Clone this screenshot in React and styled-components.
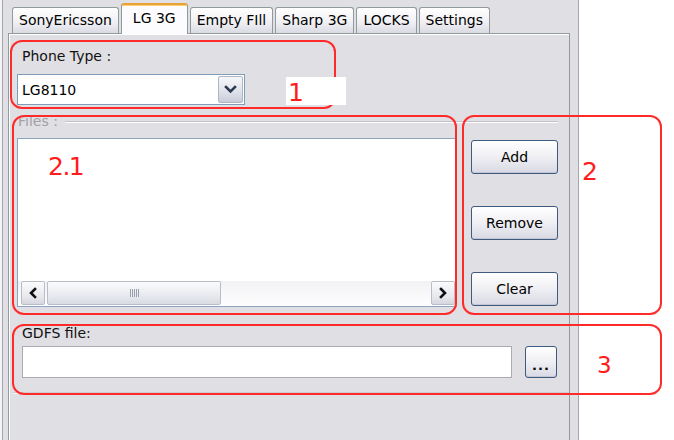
import React from "react";
import styled, { createGlobalStyle, css } from "styled-components";

const GlobalStyle = createGlobalStyle`
  html, body { margin: 0; padding: 0; background: #fff; }
  body { font-family: "DejaVu Sans", Verdana, sans-serif; }
  #root { width: 674px; height: 440px; overflow: hidden; }
`;

const Page = styled.div`
  position: relative;
  display: flex;
  width: 674px;
  height: 440px;
  background: #fff;
  overflow: hidden;
`;

const Window = styled.div`
  width: 579px;
  height: 440px;
  box-sizing: border-box;
  background: #e0dfe3;
  border-right: 1px solid #a4a6ae;
  box-shadow: inset 2px 0 0 #f3f3f5, inset 3px 0 0 #a4a6ae;
  display: flex;
  flex-direction: column;
`;

const TabStrip = styled.div`
  position: relative;
  z-index: 1;
  display: flex;
  align-items: flex-end;
  height: 33px;
  padding-left: 12px;
  gap: 2px;
`;

const Tab = styled.div`
  box-sizing: border-box;
  font-size: 14px;
  line-height: 17px;
  color: #000;
  white-space: nowrap;
  border: 1px solid #919b9c;
  border-bottom: none;
  border-radius: 3px 3px 0 0;
  ${(p) =>
    p.$active
      ? css`
          height: 31px;
          margin-bottom: -1px;
          padding: 5px 11px 0;
          background: #fcfcfe;
          border-top: 2px solid #e8a23c;
          box-shadow: inset 0 1px 0 #ffcf6a;
        `
      : css`
          height: 26px;
          padding: 4px 6px 0;
          background: linear-gradient(#ffffff, #f1f1f5 55%, #dadbe3);
        `}
`;

const Panel = styled.div`
  margin-left: 8px;
  width: 562px;
  flex: 1;
  box-sizing: border-box;
  border: 1px solid #919b9c;
  border-bottom: none;
  background: #e0dfe3;
  box-shadow: inset 1px 1px 0 #fff;
  display: flex;
  flex-direction: column;
`;

const PhoneSection = styled.div`
  margin-top: 14px;
  padding-left: 8px;
  display: flex;
  flex-direction: column;
  align-items: flex-start;
`;

const FieldLabel = styled.div`
  font-size: 14px;
  line-height: 17px;
  height: 17px;
  color: ${(p) => (p.$disabled ? "#a2a2a6" : "#111")};
  margin-left: ${(p) => p.$indent || 0}px;
  white-space: nowrap;
`;

const Combo = styled.div`
  margin-top: 9px;
  width: 228px;
  height: 31px;
  box-sizing: border-box;
  border: 1px solid #7f9db9;
  background: #fff;
  display: flex;
  align-items: center;
  font-size: 14px;
  color: #000;
`;

const ComboText = styled.span`
  padding-left: 4px;
  flex: 1;
`;

const ComboButton = styled.div`
  width: 25px;
  height: 27px;
  margin-right: 1px;
  box-sizing: border-box;
  border: 1px solid #aeb6c6;
  border-radius: 2px;
  background: linear-gradient(#f6f7fa, #dfe1ea 60%, #c9ccd8);
  display: flex;
  align-items: center;
  justify-content: center;
`;

const FilesGroup = styled.div`
  margin-top: 8px;
  margin-left: 9px;
  width: 540px;
  display: flex;
  flex-direction: column;
`;

const LegendRow = styled.div`
  display: flex;
  align-items: center;
  height: 17px;
`;

const GroupLine = styled.div`
  flex: 1;
  height: 0;
  margin-left: ${(p) => p.$gap || 0}px;
  border-top: 1px solid #c2c2c8;
  border-bottom: 1px solid #fff;
`;

const FilesRow = styled.div`
  display: flex;
  margin-top: 8px;
  margin-left: -1px;
`;

const ListBox = styled.div`
  width: 440px;
  height: 169px;
  box-sizing: border-box;
  border: 1px solid #8ea5c0;
  background: #fff;
  display: flex;
  flex-direction: column;
  justify-content: flex-end;
`;

const HScroll = styled.div`
  height: 24px;
  margin-bottom: 1px;
  padding: 0 1px 0 3px;
  display: flex;
  align-items: stretch;
  background: linear-gradient(#f2f2f5, #fdfdfe);
`;

const ScrollArrow = styled.div`
  width: 24px;
  box-sizing: border-box;
  border: 1px solid #b9bdc8;
  border-radius: 2px;
  background: linear-gradient(#fbfbfc, #e6e7ed 70%, #d5d7df);
  display: flex;
  align-items: center;
  justify-content: center;
`;

const ScrollThumb = styled.div`
  width: 174px;
  margin-left: 2px;
  box-sizing: border-box;
  border: 1px solid #b9bdc8;
  border-radius: 2px;
  background: linear-gradient(#fbfbfc, #e9eaef 60%, #d9dbe2);
  display: flex;
  align-items: center;
  justify-content: center;
`;

const ScrollTrack = styled.div`
  flex: 1;
`;

const ButtonColumn = styled.div`
  margin-left: 14px;
  padding-top: 2px;
  display: flex;
  flex-direction: column;
  gap: 32px;
`;

const XPButton = styled.div`
  width: ${(p) => p.$w || 87}px;
  height: ${(p) => p.$h || 34}px;
  box-sizing: border-box;
  border: 1px solid #3d5a7f;
  border-radius: 3px;
  background: linear-gradient(#ffffff, #f1f1f5 45%, #d8d9e4);
  box-shadow: inset 0 -1px 0 #c4c6d4;
  display: flex;
  align-items: center;
  justify-content: center;
  font-size: 14px;
  color: #000;
`;

const Dots = styled.span`
  font-weight: bold;
  font-size: 13px;
  line-height: 1;
  margin-top: 6px;
  letter-spacing: 1px;
`;

const GdfsSection = styled.div`
  margin-top: 18px;
  padding-left: 13px;
  display: flex;
  flex-direction: column;
`;

const InputRow = styled.div`
  display: flex;
  margin-top: 4px;
`;

const TextBox = styled.div`
  width: 490px;
  height: 32px;
  box-sizing: border-box;
  border: 1px solid #a9adb3;
  background: #fff;
`;

const Separator = styled.div`
  margin: 14px 0 0 -9px;
  height: 0;
  border-top: 1px solid #cbcbd0;
  border-bottom: 1px solid #fafafc;
`;

/* annotation overlay drawn on top of the screenshot */
const AnnoBox = styled.div`
  position: absolute;
  box-sizing: border-box;
  border: 2px solid #ff2b2b;
  border-radius: 12px;
  pointer-events: none;
`;

const AnnoNumber = styled.div`
  position: absolute;
  font-family: "DejaVu Sans", Verdana, sans-serif;
  font-size: ${(p) => p.$size || 25}px;
  line-height: 1;
  color: #ff1c1c;
  letter-spacing: ${(p) => p.$ls || 0}px;
  white-space: nowrap;
`;

const AnnoTag = styled.div`
  position: absolute;
  background: #fff;
  box-sizing: border-box;
  padding: 3px 0 0 2px;
  font-size: 25px;
  line-height: 1;
  color: #ff1c1c;
`;

const ChevronDown = () => (
  <svg width="13" height="9" viewBox="0 0 13 9">
    <path d="M2 2 L6.5 6.5 L11 2" fill="none" stroke="#2e3a52" strokeWidth="2.6" strokeLinecap="square" />
  </svg>
);

const Chevron = ({ dir }) => (
  <svg width="10" height="12" viewBox="0 0 10 12">
    <path
      d={dir === "left" ? "M7 2 L3 6 L7 10" : "M3 2 L7 6 L3 10"}
      fill="none"
      stroke="#111"
      strokeWidth="2.6"
      strokeLinecap="square"
    />
  </svg>
);

const Grip = () => (
  <svg width="9" height="8" viewBox="0 0 9 8">
    {[0.5, 2.5, 4.5, 6.5, 8.5].map((x) => (
      <line key={x} x1={x} y1="0" x2={x} y2="8" stroke="#9aa0ae" strokeWidth="1" />
    ))}
  </svg>
);

const tabs = ["SonyEricsson", "LG 3G", "Empty FIll", "Sharp 3G", "LOCKS", "Settings"];

export default function App() {
  return (
    <>
      <GlobalStyle />
      <Page>
        <Window>
          <TabStrip>
            {tabs.map((t) => (
              <Tab key={t} $active={t === "LG 3G"}>
                {t}
              </Tab>
            ))}
          </TabStrip>
          <Panel>
            <PhoneSection>
              <FieldLabel $indent={5}>Phone Type :</FieldLabel>
              <Combo>
                <ComboText>LG8110</ComboText>
                <ComboButton>
                  <ChevronDown />
                </ComboButton>
              </Combo>
            </PhoneSection>

            <FilesGroup>
              <LegendRow>
                <FieldLabel $disabled>Files :</FieldLabel>
                <GroupLine $gap={7} />
              </LegendRow>
              <FilesRow>
                <ListBox>
                  <HScroll>
                    <ScrollArrow>
                      <Chevron dir="left" />
                    </ScrollArrow>
                    <ScrollThumb>
                      <Grip />
                    </ScrollThumb>
                    <ScrollTrack />
                    <ScrollArrow>
                      <Chevron dir="right" />
                    </ScrollArrow>
                  </HScroll>
                </ListBox>
                <ButtonColumn>
                  <XPButton>Add</XPButton>
                  <XPButton>Remove</XPButton>
                  <XPButton>Clear</XPButton>
                </ButtonColumn>
              </FilesRow>
            </FilesGroup>

            <GdfsSection>
              <FieldLabel>GDFS file:</FieldLabel>
              <InputRow>
                <TextBox />
                <XPButton $w={32} $h={32} style={{ marginLeft: 13 }}>
                  <Dots>...</Dots>
                </XPButton>
              </InputRow>
              <Separator />
            </GdfsSection>
          </Panel>
        </Window>

        <AnnoBox style={{ left: 10, top: 40, width: 326, height: 69 }} />
        <AnnoTag style={{ left: 286, top: 77, width: 60, height: 28 }}>1</AnnoTag>

        <AnnoBox style={{ left: 12, top: 115, width: 445, height: 200 }} />
        <AnnoNumber style={{ left: 48, top: 154 }} $ls={-1.5}>
          2.1
        </AnnoNumber>

        <AnnoBox style={{ left: 462, top: 115, width: 200, height: 200 }} />
        <AnnoNumber style={{ left: 582, top: 159 }}>2</AnnoNumber>

        <AnnoBox style={{ left: 12, top: 324, width: 650, height: 71 }} />
        <AnnoNumber style={{ left: 597, top: 354 }} $size={23}>
          3
        </AnnoNumber>
      </Page>
    </>
  );
}
